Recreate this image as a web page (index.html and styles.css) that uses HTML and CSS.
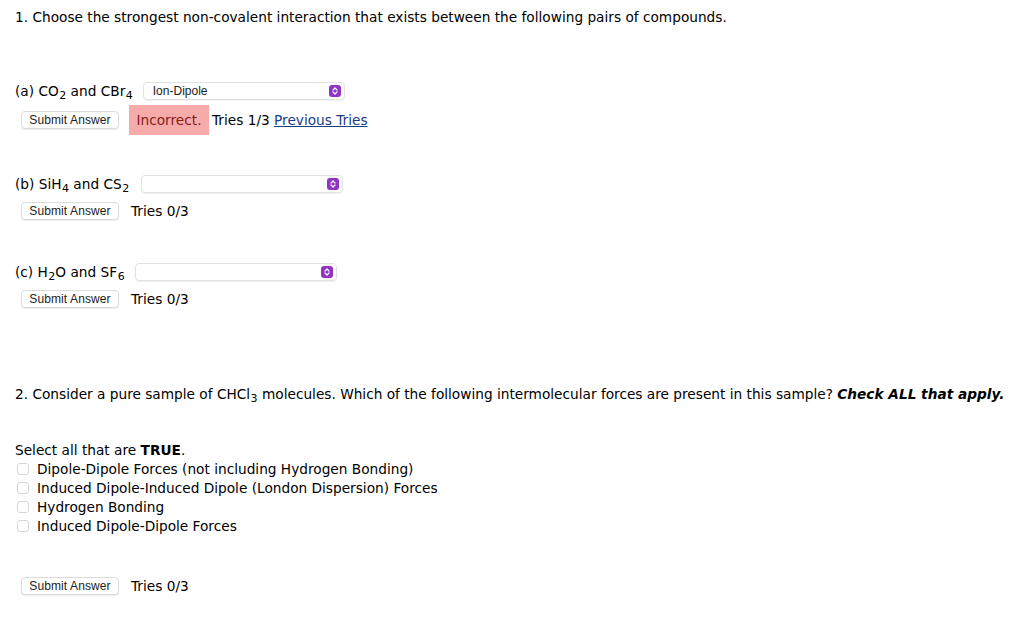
FILE: index.html
```html
<!DOCTYPE html>
<html>
<head>
<meta charset="utf-8">
<link rel="stylesheet" href="styles.css">
</head>
<body>
<div class="page">
  <p class="q q1">1. Choose the strongest non-covalent interaction that exists between the following pairs of compounds.</p>

  <div class="part part-a">
    <span class="label">(a) CO<sub>2</sub> and CBr<sub>4</sub></span>
    <span class="select sel-a"><span class="sel-text">Ion-Dipole</span><span class="arrow"><svg viewBox="0 0 12 12" width="12" height="12"><path d="M4 5 L6 3 L8 5 M4 7 L6 9 L8 7" fill="none" stroke="#fff" stroke-width="1.2" stroke-linecap="round" stroke-linejoin="round"/></svg></span></span>
  </div>
  <div class="submit-row row-a">
    <span class="btn">Submit Answer</span>
    <span class="incorrect">Incorrect.</span>
    <span class="tries tries-a">Tries 1/3 <a class="prev">Previous Tries</a></span>
  </div>

  <div class="part part-b">
    <span class="label">(b) SiH<sub>4</sub> and CS<sub>2</sub></span>
    <span class="select sel-b"><span class="sel-text"></span><span class="arrow"><svg viewBox="0 0 12 12" width="12" height="12"><path d="M4 5 L6 3 L8 5 M4 7 L6 9 L8 7" fill="none" stroke="#fff" stroke-width="1.2" stroke-linecap="round" stroke-linejoin="round"/></svg></span></span>
  </div>
  <div class="submit-row row-b">
    <span class="btn">Submit Answer</span>
    <span class="tries">Tries 0/3</span>
  </div>

  <div class="part part-c">
    <span class="label">(c) H<sub>2</sub>O and SF<sub>6</sub></span>
    <span class="select sel-c"><span class="sel-text"></span><span class="arrow"><svg viewBox="0 0 12 12" width="12" height="12"><path d="M4 5 L6 3 L8 5 M4 7 L6 9 L8 7" fill="none" stroke="#fff" stroke-width="1.2" stroke-linecap="round" stroke-linejoin="round"/></svg></span></span>
  </div>
  <div class="submit-row row-c">
    <span class="btn">Submit Answer</span>
    <span class="tries">Tries 0/3</span>
  </div>

  <p class="q q2">2. Consider a pure sample of CHCl<sub>3</sub> molecules. Which of the following intermolecular forces are present in this sample? <b><i>Check ALL that apply.</i></b></p>

  <p class="select-all">Select all that are <b>TRUE</b>.</p>
  <ul class="options">
    <li><span class="cb"></span>Dipole-Dipole Forces (not including Hydrogen Bonding)</li>
    <li><span class="cb"></span>Induced Dipole-Induced Dipole (London Dispersion) Forces</li>
    <li><span class="cb"></span>Hydrogen Bonding</li>
    <li><span class="cb"></span>Induced Dipole-Dipole Forces</li>
  </ul>
  <div class="submit-row row-d">
    <span class="btn">Submit Answer</span>
    <span class="tries">Tries 0/3</span>
  </div>
</div>
</body>
</html>
```

FILE: styles.css
```css
html, body {
  margin: 0;
  padding: 0;
  background: #fff;
}
.page {
  padding: 8px 15px;
  font-family: "DejaVu Sans", Verdana, sans-serif;
  font-size: 13.7px;
  color: #000;
}
.q {
  margin: 0;
  line-height: 18px;
  white-space: nowrap;
}
sub {
  font-size: 11px;
  vertical-align: -3px;
  line-height: 0;
  margin-left: 0.5px;
}
.part {
  display: flex;
  align-items: center;
  height: 20px;
}
.part-a { margin-top: 55px; }
.part-b { margin-top: 39px; }
.part-c { margin-top: 41px; }
.label { white-space: nowrap; }
.select {
  display: flex;
  align-items: center;
  justify-content: space-between;
  box-sizing: border-box;
  width: 202px;
  height: 18px;
  margin-left: 10px;
  border: 1px solid #e2e2e2;
  border-radius: 4px;
  box-shadow: 0 1px 1px rgba(0,0,0,0.06);
  padding: 0 3px 0 9px;
  font-family: "Liberation Sans", Arial, sans-serif;
  font-size: 12px;
  color: #222;
}
.sel-b { margin-left: 12px; }
.arrow {
  width: 12px;
  height: 12px;
  border-radius: 3px;
  background: #9233c7;
  display: flex;
}
.submit-row {
  display: flex;
  align-items: center;
  height: 20px;
}
.row-a { margin-top: 4px; height: 30px; }
.row-b { margin-top: 7px; }
.row-c { margin-top: 7px; }
.row-d { margin-top: 41px; }
.btn {
  box-sizing: border-box;
  width: 98px;
  height: 18px;
  margin-left: 6px;
  display: flex;
  align-items: center;
  justify-content: center;
  border: 1px solid #dcdcdc;
  border-radius: 4px;
  box-shadow: 0 1px 1px rgba(0,0,0,0.08);
  font-family: "Liberation Sans", Arial, sans-serif;
  font-size: 12px;
  letter-spacing: 0.1px;
  color: #222;
  background: #fff;
}
.incorrect {
  margin-left: 10px;
  height: 30px;
  width: 80px;
  box-sizing: border-box;
  display: flex;
  align-items: center;
  justify-content: center;
  background: #f4abaa;
  color: #8a1b1b;
}
.tries { margin-left: 12px; }
.tries-a { margin-left: 3px; }
.prev {
  color: #1b3c86;
  text-decoration: underline;
}
.q2 { margin-top: 76px; }
.select-all {
  margin: 38px 0 0;
  line-height: 18px;
}
.options {
  list-style: none;
  margin: 0;
  padding: 0;
}
.options li {
  display: flex;
  align-items: center;
  height: 19px;
}
.cb {
  box-sizing: border-box;
  width: 12px;
  height: 12px;
  margin: 0 8px 0 2px;
  border: 1px solid #d6d6d6;
  border-radius: 3px;
  background: #fff;
}
```
